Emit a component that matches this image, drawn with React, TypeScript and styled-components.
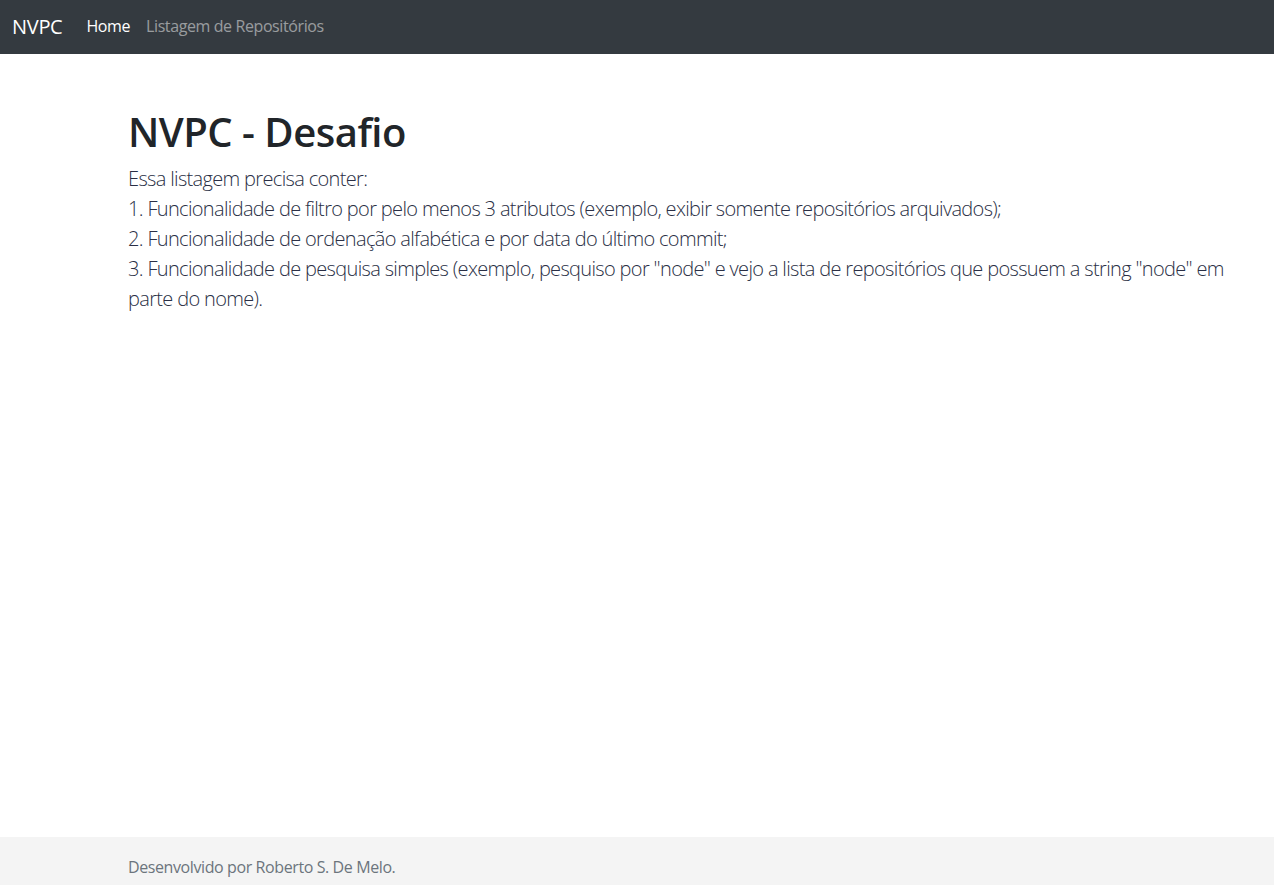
import React from "react";
import styled, { createGlobalStyle } from "styled-components";

const Global = createGlobalStyle`
  html, body { margin: 0; padding: 0; }
  body {
    font-family: "Open Sans", "Noto Sans", sans-serif;
    color: #212529;
    background: #fff;
  }
  * { box-sizing: border-box; }
`;

const Page = styled.div`
  min-height: 100vh;
  display: flex;
  flex-direction: column;
`;

const Navbar = styled.nav`
  height: 54px;
  background: #343a40;
  display: flex;
  align-items: center;
  padding: 0 12px 2px;
`;

const Brand = styled.a`
  font-size: 20px;
  color: #fff;
  margin-right: 24px;
  text-decoration: none;
  letter-spacing: -0.3px;
`;

const NavLink = styled.a<{ $active?: boolean }>`
  font-size: 16px;
  color: ${(p) => (p.$active ? "#fff" : "rgba(255,255,255,0.5)")};
  text-decoration: none;
  margin-right: 16px;
  letter-spacing: -0.4px;
`;

const Main = styled.main`
  flex: 1;
  padding: 54px 40px 0 128px;
`;

const Title = styled.h1`
  font-size: 40px;
  line-height: 48px;
  font-weight: 600;
  margin: 0 0 8px;
  letter-spacing: -0.5px;
`;

const Lead = styled.p`
  font-size: 20px;
  line-height: 30px;
  font-weight: 300;
  margin: 0;
  color: #2a2f45;
  letter-spacing: -0.66px;
`;

const Footer = styled.footer`
  height: 48px;
  background: #f4f4f4;
  padding: 18px 0 0 128px;
  font-size: 16px;
  line-height: 24px;
  color: #6c757d;
  letter-spacing: -0.4px;
`;

export default function App() {
  return (
    <Page>
      <Global />
      <Navbar>
        <Brand href="#">NVPC</Brand>
        <NavLink $active href="#">Home</NavLink>
        <NavLink href="#">Listagem de Repositórios</NavLink>
      </Navbar>
      <Main>
        <Title>NVPC - Desafio</Title>
        <Lead>
          Essa listagem precisa conter:
          <br />
          1. Funcionalidade de filtro por pelo menos 3 atributos (exemplo, exibir somente repositórios arquivados);
          <br />
          2. Funcionalidade de ordenação alfabética e por data do último commit;
          <br />
          3. Funcionalidade de pesquisa simples (exemplo, pesquiso por "node" e vejo a lista de repositórios que possuem a string "node" em parte do nome).
        </Lead>
      </Main>
      <Footer>Desenvolvido por Roberto S. De Melo.</Footer>
    </Page>
  );
}
